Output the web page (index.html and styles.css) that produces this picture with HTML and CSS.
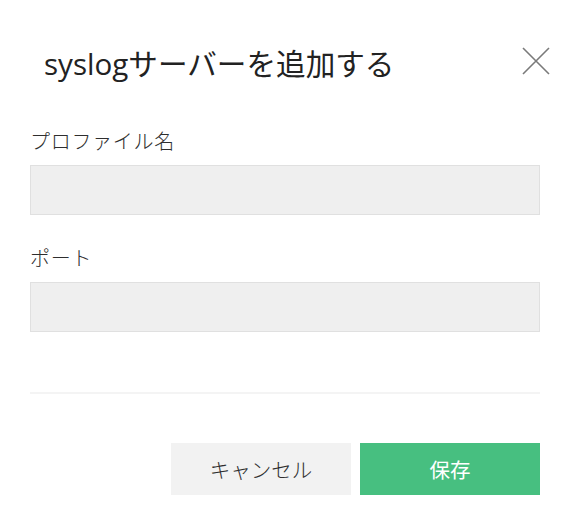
FILE: index.html
```html
<!DOCTYPE html>
<html lang="ja">
<head>
<meta charset="utf-8">
<title>syslogサーバーを追加する</title>
<link rel="stylesheet" href="styles.css">
</head>
<body>
<div class="dialog">
  <div class="header">
    <h1 class="title">syslogサーバーを追加する</h1>
    <button class="close" aria-label="閉じる">
      <svg width="28" height="28" viewBox="0 0 28 28"><path d="M1 1 L27 27 M27 1 L1 27" stroke="#7a7a7a" stroke-width="1.6" fill="none"/></svg>
    </button>
  </div>
  <div class="form">
    <div class="field field-first">
      <label class="label">プロファイル名</label>
      <div class="input"></div>
    </div>
    <div class="field field-second">
      <label class="label">ポート</label>
      <div class="input"></div>
    </div>
    <div class="divider"></div>
    <div class="actions">
      <button class="btn btn-cancel">キャンセル</button>
      <button class="btn btn-save">保存</button>
    </div>
  </div>
</div>
</body>
</html>
```
FILE: styles.css
```css
html, body {
  margin: 0;
  padding: 0;
  background: #ffffff;
}
body {
  font-family: Lato, "Noto Sans CJK JP", sans-serif;
  color: #333333;
}
.dialog {
  width: 568px;
}
.header {
  display: flex;
  justify-content: space-between;
  align-items: flex-start;
  padding: 44px 18px 0 44px;
}
.title {
  margin: 0;
  font-family: "Open Sans", "Noto Sans CJK JP", sans-serif;
  font-size: 29.6px;
  line-height: 40px;
  font-weight: 400;
  color: #222222;
}
.close {
  margin: 3px 0 0 0;
  padding: 0;
  border: 0;
  background: transparent;
  width: 28px;
  height: 28px;
  display: block;
}
.close svg {
  display: block;
}
.form {
  padding: 0 28px 0 30px;
}
.field {
  display: flex;
  flex-direction: column;
}
.field-first {
  margin-top: 45px;
}
.field-second {
  margin-top: 31px;
}
.label {
  font-size: 20px;
  letter-spacing: 0.7px;
  line-height: 24px;
  font-weight: 300;
  color: #2e2e2e;
  margin-bottom: 12px;
}
.input {
  box-sizing: border-box;
  height: 50px;
  background: #efefef;
  border: 1px solid #e0e0e0;
}
.divider {
  margin-top: 60px;
  height: 2px;
  background: #f4f4f4;
}
.actions {
  margin-top: 49px;
  display: flex;
  justify-content: flex-end;
  gap: 9px;
}
.btn {
  width: 180px;
  height: 52px;
  border: 0;
  padding: 0;
  font-family: Lato, "Noto Sans CJK JP", sans-serif;
  font-size: 20.5px;
  font-weight: 300;
}
.btn-cancel {
  background: #f2f2f2;
  color: #2e2e2e;
}
.btn-save {
  background: #47bf80;
  color: #ffffff;
  font-weight: 400;
}
```
